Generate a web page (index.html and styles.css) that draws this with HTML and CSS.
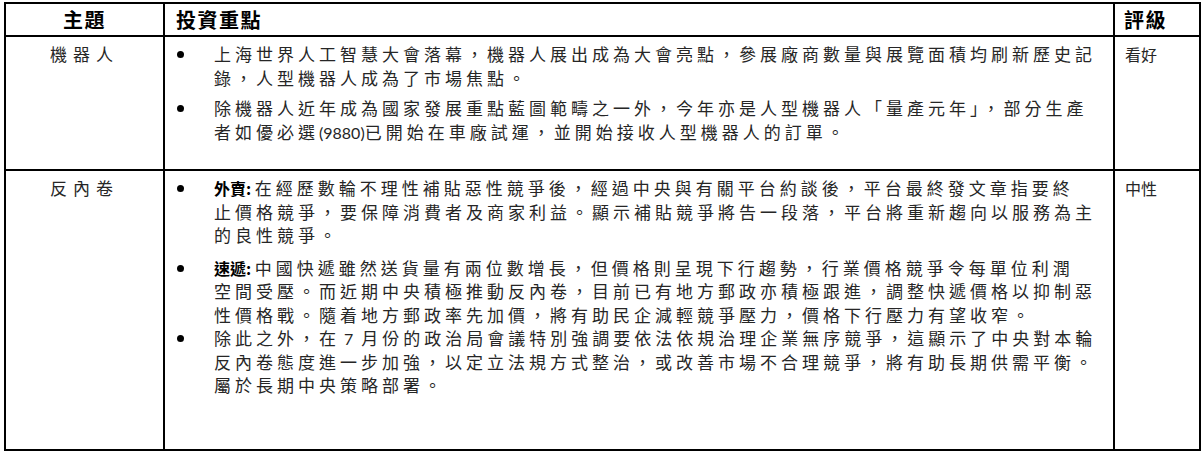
FILE: index.html
```html
<!DOCTYPE html>
<html lang="zh-Hant">
<head>
<meta charset="utf-8">
<title>投資重點</title>
<link rel="stylesheet" href="styles.css">
</head>
<body>
<table class="grid">
  <colgroup>
    <col class="c-topic">
    <col class="c-points">
    <col class="c-rating">
  </colgroup>
  <thead>
    <tr class="head-row">
      <th class="h-topic">主題</th>
      <th class="h-points">投資重點</th>
      <th class="h-rating">評級</th>
    </tr>
  </thead>
  <tbody>
    <tr class="row-robot">
      <td class="topic">機器人</td>
      <td class="points">
        <ul class="bullets">
          <li class="item gap"><span class="dot-box"><span class="dot"></span></span><p class="txt">上海世界人工智慧大會落幕，機器人展出成為大會亮點，參展廠商數量與展覽面積均刷新歷史記<br>錄，人型機器人成為了市場焦點。</p></li>
          <li class="item"><span class="dot-box"><span class="dot"></span></span><p class="txt">除機器人近年成為國家發展重點藍圖範疇之一外，今年亦是人型機器人「量產元年」，部分生產<br>者如優必選<span class="lat">(9880)</span>已開始在車廠試運，並開始接收人型機器人的訂單。</p></li>
        </ul>
      </td>
      <td class="rating">看好</td>
    </tr>
    <tr class="row-invol">
      <td class="topic">反內卷</td>
      <td class="points">
        <ul class="bullets">
          <li class="item gap-lg"><span class="dot-box"><span class="dot"></span></span><p class="txt"><b class="tag">外賣: </b>在經歷數輪不理性補貼惡性競爭後，經過中央與有關平台約談後，平台最終發文章指要終<br>止價格競爭，要保障消費者及商家利益。顯示補貼競爭將告一段落，平台將重新趨向以服務為主<br>的良性競爭。</p></li>
          <li class="item"><span class="dot-box"><span class="dot"></span></span><p class="txt"><b class="tag">速遞: </b>中國快遞雖然送貨量有兩位數增長，但價格則呈現下行趨勢，行業價格競爭令每單位利潤<br>空間受壓。而近期中央積極推動反內卷，目前已有地方郵政亦積極跟進，調整快遞價格以抑制惡<br>性價格戰。隨着地方郵政率先加價，將有助民企減輕競爭壓力，價格下行壓力有望收窄。</p></li>
          <li class="item"><span class="dot-box"><span class="dot"></span></span><p class="txt">除此之外，在<span class="lat num">7</span>月份的政治局會議特別強調要依法依規治理企業無序競爭，這顯示了中央對本輪<br>反內卷態度進一步加強，以定立法規方式整治，或改善市場不合理競爭，將有助長期供需平衡。<br>屬於長期中央策略部署。</p></li>
        </ul>
      </td>
      <td class="rating">中性</td>
    </tr>
  </tbody>
</table>
</body>
</html>
```
FILE: styles.css
```css
html, body {
  margin: 0;
  padding: 0;
  background: #ffffff;
}

body {
  font-family: Lato, "Noto Sans CJK TC", sans-serif;
  color: #262626;
  font-size: 17px;
}

.grid {
  border-collapse: collapse;
  table-layout: fixed;
  width: 1195px;
  margin: 2px 0 0 4px;
}

.c-topic { width: 159px; }
.c-points { width: 950px; }
.c-rating { width: 86px; }

.grid th,
.grid td {
  border: 2px solid #000000;
  padding: 0;
  vertical-align: top;
}

.head-row { height: 33px; }

.grid th {
  font-family: "Noto Sans CJK TC", sans-serif;
  font-weight: 700;
  font-size: 20px;
  letter-spacing: 1.5px;
  color: #000000;
  line-height: 31px;
  vertical-align: middle;
}

.grid th.h-topic { text-align: center; }
.grid th.h-points { text-align: left; padding-left: 11px; }
.grid th.h-rating { text-align: left; padding-left: 9px; }

.row-robot { height: 134px; }
.row-invol { height: 280px; }

.grid td.topic {
  text-align: center;
  letter-spacing: 6px;
  line-height: 23.5px;
  padding-top: 6px;
}

.grid td.points {
  padding: 6px 0 0 12px;
}

.grid td.rating {
  font-size: 16px;
  letter-spacing: 0;
  line-height: 23.5px;
  padding: 6px 0 0 10px;
}

.bullets {
  list-style: none;
  margin: 0;
  padding: 0;
}

.item {
  display: flex;
  align-items: flex-start;
}

.gap { margin-bottom: 7px; }
.gap-lg { margin-bottom: 9px; }

.dot-box {
  flex: 0 0 37px;
  height: 23px;
  display: flex;
  align-items: center;
}

.dot {
  width: 7px;
  height: 7px;
  border-radius: 50%;
  background: #000000;
}

.txt {
  margin: 0;
  line-height: 23.5px;
  letter-spacing: 4px;
  white-space: nowrap;
}

.lat {
  letter-spacing: 0;
  font-size: 16px;
}

.num {
  margin: 0 8px 0 4px;
}

.tag {
  font-family: "Noto Sans CJK TC", sans-serif;
  font-weight: 700;
  font-size: 16px;
  letter-spacing: 0;
  color: #000000;
}
```
